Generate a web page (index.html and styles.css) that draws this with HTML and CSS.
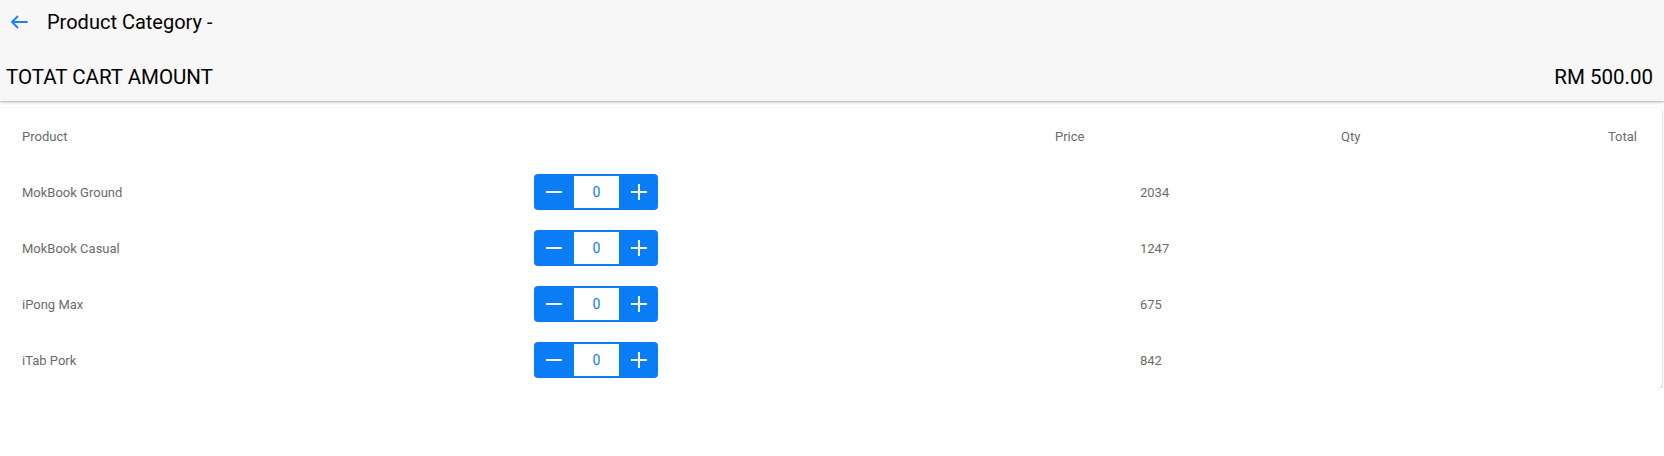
FILE: index.html
```html
<!DOCTYPE html>
<html lang="en">
<head>
<meta charset="UTF-8" />
<title>Product Category</title>
<link rel="stylesheet" href="styles.css">
</head>
<body>
  <header class="header">
    <div class="toolbar">
      <button class="back" aria-label="Back">
        <svg width="18" height="14" viewBox="0 0 18 14" fill="none" stroke="#1a82f7" stroke-width="1.8" stroke-linecap="round" stroke-linejoin="round">
          <path d="M17 7H2M7.5 1.5L2 7l5.5 5.5"/>
        </svg>
      </button>
      <div class="title">Product Category -</div>
    </div>
    <div class="summary">
      <span>TOTAT CART AMOUNT</span>
      <span>RM 500.00</span>
    </div>
  </header>

  <div class="card">
    <div class="row head">
      <div class="c-product">Product</div>
      <div class="c-price">Price</div>
      <div class="c-qty">Qty</div>
      <div class="c-total">Total</div>
    </div>

    <div class="row item">
      <div class="c-name">MokBook Ground</div>
      <div class="c-step">
        <div class="stepper"><button class="minus"></button><span class="count">0</span><button class="plus"></button></div>
      </div>
      <div class="c-val">2034</div>
    </div>
    <div class="row item">
      <div class="c-name">MokBook Casual</div>
      <div class="c-step">
        <div class="stepper"><button class="minus"></button><span class="count">0</span><button class="plus"></button></div>
      </div>
      <div class="c-val">1247</div>
    </div>
    <div class="row item">
      <div class="c-name">iPong Max</div>
      <div class="c-step">
        <div class="stepper"><button class="minus"></button><span class="count">0</span><button class="plus"></button></div>
      </div>
      <div class="c-val">675</div>
    </div>
    <div class="row item">
      <div class="c-name">iTab Pork</div>
      <div class="c-step">
        <div class="stepper"><button class="minus"></button><span class="count">0</span><button class="plus"></button></div>
      </div>
      <div class="c-val">842</div>
    </div>
  </div>
</body>
</html>
```

FILE: styles.css
```css
body {
  margin: 0;
  background: #fff;
  font-family: Roboto, "Liberation Sans", sans-serif;
  color: #000;
}
.header {
  background: #f7f7f7;
  height: 101px;
  box-shadow: 0 1px 2px rgba(0, 0, 0, 0.25), 0 2px 4px rgba(0, 0, 0, 0.08);
  position: relative;
  z-index: 1;
}
.toolbar {
  height: 43px;
  display: flex;
  align-items: center;
}
.back {
  background: none;
  border: none;
  padding: 0;
  margin-left: 9px;
  width: 20px;
  height: 20px;
  display: flex;
  align-items: center;
  justify-content: center;
}
.title {
  margin-left: 18px;
  font-size: 20px;
}
.summary {
  display: flex;
  justify-content: space-between;
  align-items: center;
  padding: 22px 11px 0 6px;
  font-size: 20.5px;
}
.card {
  margin: 8px 2px 0 0;
  background: #fff;
  border-radius: 0 4px 4px 0;
  box-shadow: 0 1px 2px rgba(0, 0, 0, 0.3), 0 0 3px rgba(0, 0, 0, 0.06);
  padding: 0 25px 0 22px;
  height: 280px;
  box-sizing: border-box;
}
.row {
  display: flex;
  align-items: center;
  height: 56px;
  font-size: 13px;
  color: #6b6b6b;
}
.head {
  margin-top: -1px;
}
.c-product { width: 1033px; }
.c-price { width: 286px; }
.c-qty { flex: 1; }
.c-total { text-align: right; }
.c-name { width: 512px; }
.c-step { width: 606px; }
.stepper {
  display: flex;
  width: 124px;
  height: 36px;
  background: #0a7cf5;
  border-radius: 4px;
  align-items: center;
  box-sizing: border-box;
}
.stepper button {
  border: none;
  background: none;
  height: 36px;
  position: relative;
  padding: 0;
}
.minus { width: 40px; }
.plus { width: 39px; }
.minus::before, .plus::before, .plus::after {
  content: "";
  position: absolute;
  background: #fff;
  left: 50%;
  top: 50%;
}
.minus::before, .plus::before {
  width: 16px;
  height: 2px;
  transform: translate(-50%, -50%);
}
.plus::after {
  width: 2px;
  height: 16px;
  transform: translate(-50%, -50%);
}
.count {
  width: 45px;
  height: 32px;
  background: #fff;
  color: #0a7cf5;
  display: flex;
  align-items: center;
  justify-content: center;
  font-size: 14px;
}
```
